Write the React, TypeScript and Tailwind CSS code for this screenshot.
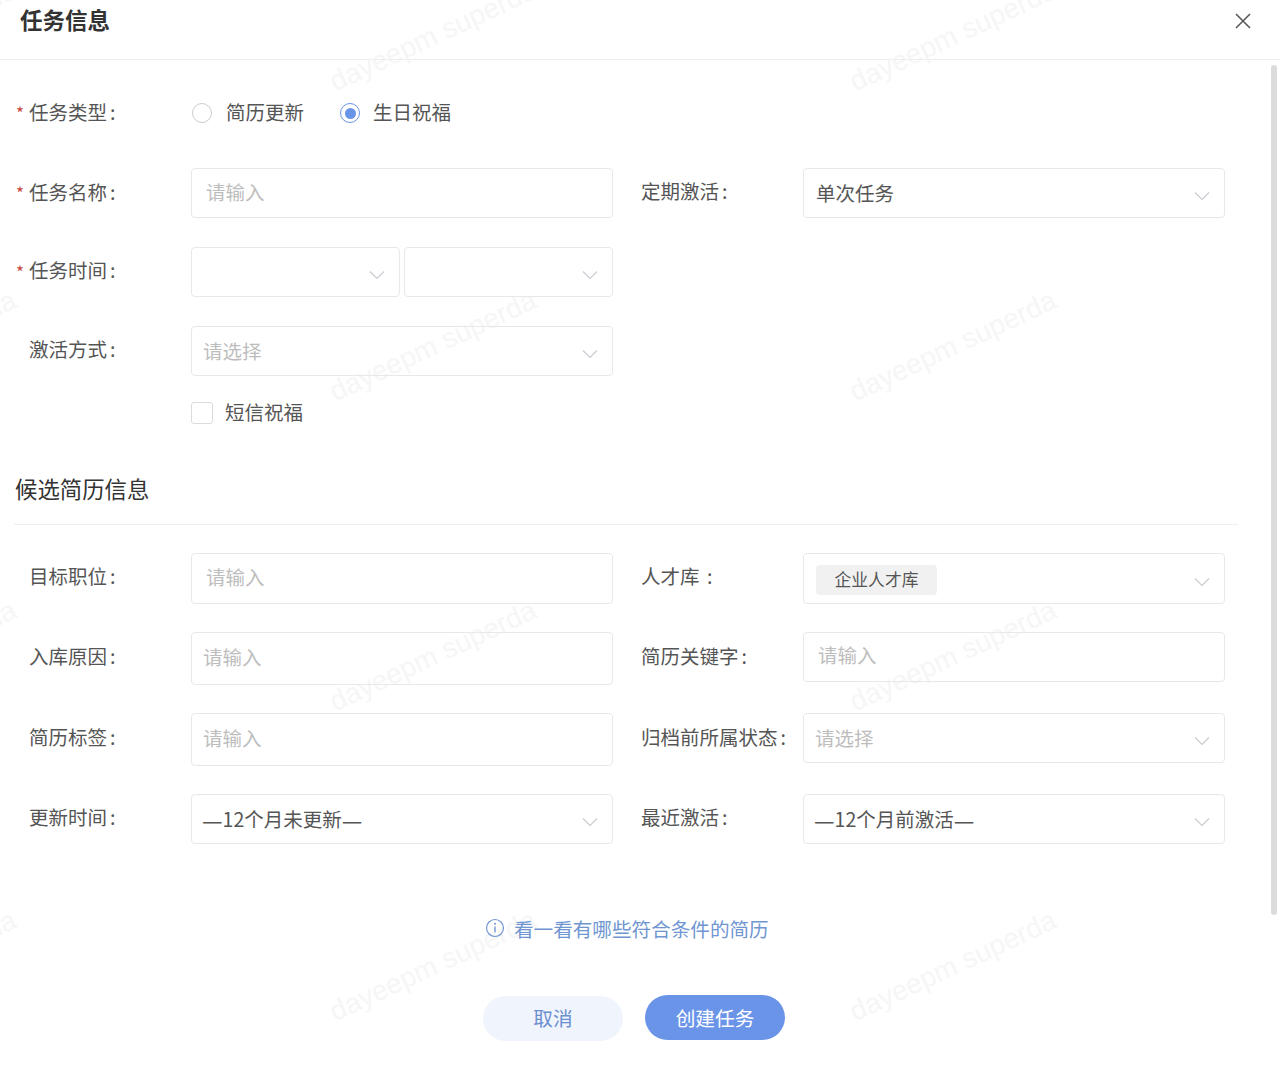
import React from 'react';

const Chevron = () => (
  <svg width="16" height="10" viewBox="0 0 16 10" fill="none" className="absolute right-[14px] top-1/2 -translate-y-[2px]">
    <path d="M1 1.5 L8 8.5 L15 1.5" stroke="#c9cbd0" strokeWidth="1.1" />
  </svg>
);

const boxClass = 'relative flex items-center rounded-[4px] border border-[#e6e8ec] text-[19.5px]';

const Colon = () => <span className="ml-[3px]">:</span>;

const Label = ({ text, required, pb = 'pb-[4px]' }: { text: string; required?: boolean; pb?: string }) => (
  <div className={`relative flex w-[191px] shrink-0 items-center pl-[29px] text-[19.5px] text-[#555] ${pb}`}>
    {required && <span className="absolute left-[16px] top-[50%] -translate-y-[50%] text-[17px] text-[#c9483f]">*</span>}
    <span className="whitespace-pre">
      {text}
      <Colon />
    </span>
  </div>
);

const RightLabel = ({ text, pb = 'pb-[4px]' }: { text: string; pb?: string }) => (
  <div className={`flex w-[190px] shrink-0 items-center pl-[28px] text-[19.5px] text-[#555] ${pb}`}>
    <span className="whitespace-pre">
      {text}
      <Colon />
    </span>
  </div>
);

const TextInput = ({ pad = 'pl-[14px]', h = 'h-[50px]', pb = 'pb-[4px]' }: { pad?: string; h?: string; pb?: string }) => (
  <div className={`${boxClass} ${pad} ${h} ${pb} w-[422px] text-[#bdbdbd]`}>请输入</div>
);

const Select = ({ children, placeholder, w = 'w-[422px]' }: { children?: React.ReactNode; placeholder?: boolean; w?: string }) => (
  <div className={`${boxClass} h-[50px] ${w} ${placeholder ? 'pl-[11px] text-[#bdbdbd]' : 'pl-[12px] text-[#555]'}`}>
    {children}
    <Chevron />
  </div>
);

const Dash = () => <span className="text-[23px] leading-none">—</span>;

const Row = ({ children, className = '' }: { children: React.ReactNode; className?: string }) => (
  <div className={`flex items-stretch ${className}`}>{children}</div>
);

const Watermark = () => (
  <div className="pointer-events-none absolute left-[-347px] top-[-119px] grid grid-cols-[repeat(3,520px)] grid-rows-[repeat(4,310px)]">
    {Array.from({ length: 12 }).map((_, i) => (
      <div key={i} className="flex items-center justify-center">
        <span className="-rotate-[25deg] whitespace-nowrap font-['Liberation_Sans',sans-serif] text-[28px] text-[#f6f6f6]">
          dayeepm superda
        </span>
      </div>
    ))}
  </div>
);

export default function App() {
  return (
    <div className="relative h-[1085px] w-[1280px] overflow-hidden bg-white font-['Noto_Sans_CJK_SC','Noto_Sans',sans-serif]">
      <Watermark />

      <div className="relative">
        <header className="relative flex h-[60px] items-start border-b border-[#eeeeee] pl-[20px] pt-[2px]">
          <h1 className="text-[22.5px] font-semibold leading-[34px] text-[#333]">任务信息</h1>
          <svg width="16" height="16" viewBox="0 0 16 16" fill="none" className="absolute left-[1235px] top-[13px]">
            <path d="M1 1 L15 15 M15 1 L1 15" stroke="#555" strokeWidth="1.5" />
          </svg>
        </header>

        <div className="pt-[33px]">
          <Row className="h-[40px]">
            <Label text="任务类型" required pb="pb-[2px]" />
            <div className="flex items-center text-[19.5px] text-[#555]">
              <span className="ml-px h-[20px] w-[20px] rounded-full border border-[#c9ccd1]" />
              <span className="ml-[14px] pb-[2px]">简历更新</span>
              <span className="ml-[36px] flex h-[20px] w-[20px] items-center justify-center rounded-full border border-[#6a94e8]">
                <span className="h-[11px] w-[11px] rounded-full bg-[#6a94e8]" />
              </span>
              <span className="ml-[13px] pb-[2px]">生日祝福</span>
            </div>
          </Row>

          <Row className="mt-[35px]">
            <Label text="任务名称" required pb="pb-[2px]" />
            <TextInput pb="pb-[2px]" />
            <RightLabel text="定期激活" />
            <Select>单次任务</Select>
          </Row>

          <Row className="mt-[29px]">
            <Label text="任务时间" required />
            <div className="flex gap-[4px]">
              <Select w="w-[209px]" />
              <Select w="w-[209px]" />
            </div>
          </Row>

          <Row className="mt-[29px]">
            <Label text="激活方式" />
            <Select placeholder>请选择</Select>
          </Row>

          <div className="mt-[26px] flex h-[22px] items-center pl-[191px] text-[19.5px] text-[#555]">
            <span className="h-[22px] w-[22px] rounded-[3px] border border-[#d9dbdf]" />
            <span className="ml-[12px] pb-[2px]">短信祝福</span>
          </div>

          <h2 className="ml-[15px] mt-[49px] text-[22.4px] leading-[30px] text-[#333]">候选简历信息</h2>
          <div className="ml-[14px] mt-[21px] w-[1224px] border-t border-[#eeeeee]" />

          <Row className="mt-[28px]">
            <Label text="目标职位" pb="pb-[6px]" />
            <TextInput h="h-[51px]" />
            <RightLabel text="人才库 " pb="pb-[6px]" />
            <div className={`${boxClass} h-[51px] w-[422px] pl-[12px]`}>
              <span className="mt-[2px] flex h-[30px] w-[121px] items-center justify-center rounded-[4px] bg-[#f1f1f1] text-[16.8px] text-[#555]">
                企业人才库
              </span>
              <Chevron />
            </div>
          </Row>

          <Row className="mt-[28px] h-[53px]">
            <Label text="入库原因" pb="pb-[6px]" />
            <TextInput pad="pl-[11px]" h="h-[53px]" />
            <RightLabel text="简历关键字" pb="pb-[6px]" />
            <TextInput />
          </Row>

          <Row className="mt-[28px] h-[53px]">
            <Label text="简历标签" pb="pb-[6px]" />
            <TextInput pad="pl-[11px]" h="h-[53px]" />
            <RightLabel text="归档前所属状态" pb="pb-[6px]" />
            <Select placeholder>请选择</Select>
          </Row>

          <Row className="mt-[28px]">
            <Label text="更新时间" />
            <Select>
              <span className="-ml-[2px]" />
              <Dash />
              12个月未更新
              <Dash />
            </Select>
            <RightLabel text="最近激活" />
            <Select>
              <span className="-ml-[2px]" />
              <Dash />
              12个月前激活
              <Dash />
            </Select>
          </Row>

          <div className="mt-[69px] flex h-[32px] items-center pl-[485px] text-[19.6px] text-[#7096d2]">
            <svg width="20" height="20" viewBox="0 0 20 20" fill="none" className="-mt-[3px]">
              <circle cx="10" cy="10" r="8.5" stroke="#7096d2" strokeWidth="1.2" />
              <path d="M10 8.5 V14.5" stroke="#7096d2" strokeWidth="1.4" />
              <circle cx="10" cy="5.8" r="1" fill="#7096d2" />
            </svg>
            <span className="ml-[9px]">看一看有哪些符合条件的简历</span>
          </div>

          <div className="mt-[50px] flex items-start pl-[483px] text-[19.7px]">
            <button className="mt-px flex h-[45px] w-[140px] items-center justify-center rounded-full bg-[#f0f4fc] pb-[2px] text-[#6a8fd0]">
              取消
            </button>
            <button className="ml-[22px] flex h-[45px] w-[140px] items-center justify-center rounded-full bg-[#6a94e8] text-white">
              创建任务
            </button>
          </div>
        </div>
      </div>

      <div className="absolute left-[1271px] top-[65px] h-[850px] w-[6px] rounded-[3px] bg-[#dcdcdc]" />
    </div>
  );
}
